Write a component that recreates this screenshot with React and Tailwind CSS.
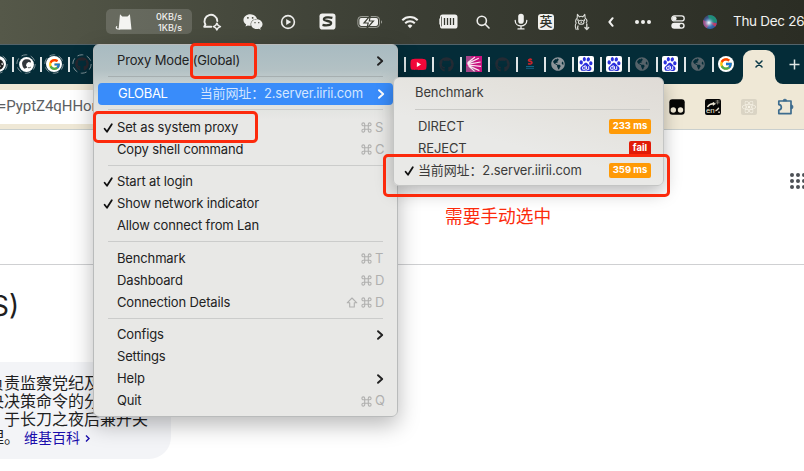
import React from 'react';
import { FaYoutube, FaGithub, FaWeixin, FaReact, FaGlobeAmericas } from 'react-icons/fa';
import { FcGoogle } from 'react-icons/fc';
import { SiBaidu } from 'react-icons/si';

/* ---------- shared glyphs ---------- */

const Check = () => (
  <svg width="11" height="12" viewBox="0 0 11 12" fill="none" stroke="currentColor" strokeWidth="1.8" strokeLinecap="round" strokeLinejoin="round">
    <path d="M1.6 6.8 4 9.8 8.8 2.2" />
  </svg>
);

const Chevron = () => (
  <svg width="8" height="12" viewBox="0 0 8 12" fill="none" stroke="currentColor" strokeWidth="1.9" strokeLinecap="round" strokeLinejoin="round">
    <path d="M2 2.200 6.200 6 2 9.800" />
  </svg>
);

const Command = () => (
  <svg width="11" height="11" viewBox="0 0 11 11" fill="none" stroke="currentColor" strokeWidth="1.1">
    <path d="M3.7 3.7h3.6v3.6H3.7zM3.7 3.7H2.3a1.4 1.4 0 1 1 1.4-1.4zM7.3 3.7V2.3a1.4 1.4 0 1 1 1.4 1.4zM7.3 7.3h1.4a1.4 1.4 0 1 1-1.4 1.4zM3.7 7.3v1.4a1.4 1.4 0 1 1-1.4-1.4z" />
  </svg>
);

const Shift = () => (
  <svg width="12" height="11" viewBox="0 0 12 11" fill="none" stroke="currentColor" strokeWidth="1.1" strokeLinejoin="round">
    <path d="M6 1 10.8 5.8H8.3V10H3.7V5.8H1.2z" />
  </svg>
);

/* ---------- system menu bar ---------- */

const CatIcon = () => (
  <svg width="18" height="18" viewBox="0 0 18 18" fill="#f4f4f2">
    <path d="M5 1.2 7.3 3.4h5.2L14.9 1.2l1.6 15.3H3.6z" />
    <path d="M4.6 16H3C1.4 16 .8 14.7 1.7 13.6" fill="none" stroke="#f4f4f2" strokeWidth="1.2" strokeLinecap="round" />
  </svg>
);

const ChatIcon = () => (
  <svg width="20" height="18" viewBox="0 0 20 18" fill="none" stroke="#eeeeec" strokeWidth="1.9" strokeLinecap="round" strokeLinejoin="round">
    <path d="M9.3 13.7H2.2l1.2-2.2A6.4 6.4 0 1 1 15.3 8" />
    <path d="M14.9 10.2 16.1 12.4 18.4 13.6 16.1 14.8 14.9 17 13.7 14.8 11.4 13.6 13.7 12.4z" strokeWidth="1.5" />
  </svg>
);

const PlayIcon = () => (
  <svg width="16" height="16" viewBox="0 0 16 16">
    <circle cx="8" cy="8" r="6.4" fill="none" stroke="#eeeeec" strokeWidth="1.6" />
    <path d="M6.2 4.9v6.2L11.2 8z" fill="#eeeeec" />
  </svg>
);

const SogouIcon = () => (
  <svg width="17" height="17" viewBox="0 0 17 17">
    <rect x=".5" y=".5" width="16" height="16" rx="2.8" fill="#f0f0ee" />
    <path d="M13.4 4.8C10.5 4 5 3.9 4.9 6.3c0 2.2 7.2 1.2 7.2 3.6 0 2.6-5.3 2.8-8.6 1.9" fill="none" stroke="#34372e" strokeWidth="2.3" />
  </svg>
);

const BatteryIcon = () => (
  <svg width="26" height="14" viewBox="0 0 26 14">
    <rect x=".9" y="1.6" width="21.6" height="10.8" rx="3.2" fill="none" stroke="#a3a49d" strokeWidth="1" />
    <rect x="2.4" y="3.1" width="18.6" height="7.8" rx="1.8" fill="#f0f0ee" />
    <path d="M24 5.2v3.6c1.3-.6 1.3-3 0-3.6z" fill="#a3a49d" />
    <path d="M13.4.4 7 8h4.2l-1.3 5.4L16.4 6h-4.1z" fill="#f4f4f2" stroke="#3c3f35" strokeWidth="1.2" />
  </svg>
);

const WifiIcon = () => (
  <svg width="18" height="14" viewBox="0 0 18 14" fill="none" stroke="#f0f0ee" strokeWidth="2">
    <path d="M1.3 5.2a10.9 10.9 0 0 1 15.4 0" />
    <path d="M4.2 8.2a6.8 6.8 0 0 1 9.6 0" />
    <path d="M9 13.2 6.6 10.7a3.4 3.4 0 0 1 4.8 0z" fill="#f0f0ee" stroke="none" />
  </svg>
);

const MemoryIcon = () => (
  <svg width="19" height="15" viewBox="0 0 19 15">
    <rect x="1" y=".5" width="17.5" height="14" rx="2.6" fill="#f0f0ee" />
    <path d="M.3 4.5h1.4v6H.3z" fill="#f0f0ee" />
    <path d="M5.5 4v7M8.500 4v7M11.500 4v7M14.500 4v7" stroke="#34372e" strokeWidth="1.3" />
    <path d="M2.500 2.6v9.8" stroke="#34372e" strokeWidth=".7" />
  </svg>
);

const SearchIcon = () => (
  <svg width="14" height="14" viewBox="0 0 14 14" fill="none" stroke="#eeeeec" strokeWidth="1.6" strokeLinecap="round">
    <circle cx="5.8" cy="5.8" r="4.6" />
    <path d="m9.3 9.3 3.7 3.7" />
  </svg>
);

const MicIcon = () => (
  <svg width="14" height="17" viewBox="0 0 14 17" fill="none" stroke="#f0f0ee" strokeWidth="1.3" strokeLinecap="round">
    <rect x="4.2" y=".8" width="5.6" height="9.9" rx="2.8" fill="#f0f0ee" stroke="none" />
    <path d="M1.2 7.4c0 7.4 11.6 7.4 11.6 0M7 13v2.8M4 15.9h6" />
  </svg>
);

const LlamaIcon = () => (
  <svg width="16" height="18" viewBox="0 0 16 18" fill="none" stroke="#d9dad5" strokeWidth="1.1" strokeLinecap="round" strokeLinejoin="round">
    <path d="M3.200 5.2 3.400 1.4 5.400 3.8M8.8 3.8l2-2.4.4 3.8M5.4 3.8c1-.7 2.4-.7 3.400 0M3.200 5.200C1.2 6.5 1.4 9 2.2 10c-1 1.6-1.2 4 0 6.4M11.200 5.2c2 1.3 1.8 3.5 1.100 4.6" />
    <ellipse cx="7.2" cy="9.3" rx="2.8" ry="2" />
    <path d="M4 6.800v.6M10.4 6.800v.6M7.2 9v.5M4 13c-.6 1-.6 2.200 0 3.400M12.8 11v5.4M10.9 14.6l1.9 2 1.9-2" strokeWidth="1.4" />
  </svg>
);

const ControlIcon = () => (
  <svg width="14" height="14" viewBox="0 0 14 14">
    <rect x=".8" y=".9" width="12.4" height="5" rx="2.5" fill="none" stroke="#f0f0ee" strokeWidth="1.3" />
    <circle cx="3.4" cy="3.4" r="2.2" fill="#f0f0ee" />
    <rect x=".3" y="7.8" width="13.4" height="6" rx="3" fill="#f0f0ee" />
    <circle cx="10.5" cy="10.8" r="1.8" fill="#34372e" />
  </svg>
);

const SiriIcon = () => (
  <svg width="14" height="14" viewBox="0 0 14 14">
    <defs>
      <radialGradient id="siriCore" cx=".42" cy=".55" r=".42">
        <stop offset="0" stopColor="#fff" />
        <stop offset=".3" stopColor="#b9dcee" stopOpacity=".8" />
        <stop offset="1" stopColor="#3566b0" stopOpacity="0" />
      </radialGradient>
      <linearGradient id="siriBase" x1="0" y1="0" x2="1" y2="1">
        <stop offset="0" stopColor="#3d3556" />
        <stop offset=".5" stopColor="#3c6ea8" />
        <stop offset="1" stopColor="#2a55a4" />
      </linearGradient>
    </defs>
    <circle cx="7" cy="7" r="7" fill="url(#siriBase)" />
    <path d="M5 .4C9-.6 13.6 2 14 7c-3 1-5 .6-7 0z" fill="#1f8f76" />
    <path d="M.4 5C2 6 4 6.6 7 7c-.6 3-2 5-3.4 6C.8 11.4-.3 8 .4 5z" fill="#b8437a" />
    <path d="M13.8 8.4C12 8 10 7.4 7 7c2 2 3 4 5.4 4.4z" fill="#c33a63" />
    <circle cx="7" cy="7" r="7" fill="url(#siriCore)" />
  </svg>
);

function MenuBar() {
  return (
    <header className="flex h-[45px] items-center border-b border-[#53636a] bg-gradient-to-r from-[#555849] via-[#3b3e34] to-[#2b2d24] pb-px text-[#f2f2f0] *:shrink-0">
      <div className="ml-[106px] flex h-[25px] w-[86px] items-center rounded-[5px] bg-white/15 pl-[9px] pr-[10px]">
        <CatIcon />
        <div className="ml-auto text-right text-[9px] font-medium leading-[11px]">
          <div>0KB/s</div>
          <div>1KB/s</div>
        </div>
      </div>
      <div className="flex w-[40px] justify-center"><ChatIcon /></div>
      <div className="flex w-[42px] justify-center"><FaWeixin size={20} color="#eeeeec" /></div>
      <div className="flex w-[28px] justify-center"><PlayIcon /></div>
      <div className="flex w-[50px] justify-center"><SogouIcon /></div>
      <div className="flex w-[36px] justify-center"><BatteryIcon /></div>
      <div className="flex w-[44px] justify-center"><WifiIcon /></div>
      <div className="flex w-[32px] justify-center"><MemoryIcon /></div>
      <div className="flex w-[38px] justify-center"><SearchIcon /></div>
      <div className="ml-[5px] flex w-[28px] justify-center"><MicIcon /></div>
      <div className="flex w-[22px] justify-center">
        <span className="flex size-4 items-center justify-center rounded-[3px] bg-[#f0f0ee] text-[13px] font-medium leading-none text-[#2e3128]">英</span>
      </div>
      <div className="flex w-[50px] justify-center"><LlamaIcon /></div>
      <div className="flex w-2 justify-center">
        <svg width="6" height="10" viewBox="0 0 6 10" fill="none" stroke="#f0f0ee" strokeWidth="2" strokeLinecap="round" strokeLinejoin="round"><path d="M4.6 1.2 1.4 5l3.2 3.8" /></svg>
      </div>
      <div className="ml-[13px] flex w-[30px] justify-center gap-[2px]">
        <i className="size-1 rounded-full bg-[#f0f0ee]" />
        <i className="size-1 rounded-full bg-[#f0f0ee]" />
        <i className="size-1 rounded-full bg-[#f0f0ee]" />
      </div>
      <div className="flex w-[40px] justify-center"><ControlIcon /></div>
      <div className="flex w-[24px] justify-center"><SiriIcon /></div>
      <span className="ml-[11px] whitespace-nowrap text-[13.5px] tracking-[-0.3px]">Thu Dec 26</span>
    </header>
  );
}

/* ---------- browser chrome ---------- */

function Ringed({ children }) {
  return (
    <span className="relative flex size-4 items-center justify-center">
      {children}
      <svg className="absolute -left-[2px] -top-[2px]" width="20" height="20" viewBox="0 0 20 20" fill="none">
        <circle cx="10" cy="10" r="9.2" stroke="#7d9096" strokeWidth="1" strokeDasharray="6 3.6" />
      </svg>
    </span>
  );
}

const White = ({ children }) => (
  <span className="flex size-4 items-center justify-center rounded-full bg-white">{children}</span>
);

const Penguin = () => (
  <svg width="15" height="15" viewBox="0 0 15 15">
    <circle cx="7.5" cy="7.5" r="7.4" fill="#fff" />
    <path d="M3.2 7.6C2.6 4 5 2 8.4 2.2c2.6.2 3.800 1.600 3.600 3.200L9.4 5 7.6 6.4 7 8.400l1.400 2.200-3 1.200C4 10.800 3.400 9 3.200 7.600z" fill="#33373c" />
    <path d="M9 10.6c1.2.4 2.4 0 3-.8" stroke="#555" strokeWidth="1" fill="none" />
  </svg>
);

const Baidu = () => (
  <span className="flex size-4 items-center justify-center rounded-[2px] bg-white">
    <SiBaidu size={14} color="#2a2fdc" />
  </span>
);

const Globe = ({ color }) => <FaGlobeAmericas size={14} color={color} />;

const Burst = () => (
  <svg width="16" height="16" viewBox="0 0 16 16">
    <rect width="16" height="16" fill="#c9127f" />
    <path d="M0 0h5l3 7-8 1zM0 10h7l4 6H0z" fill="#a8458a" />
    <path d="M1.5 8.4 14.6 6M1.8 9 15 10.4M2.4 9.6l11 5M1.4 7.6 12.8 2.2M3 10.4 8.6 15.4M1.6 6.8 9 1" stroke="#fbe6f2" strokeWidth="1.2" />
  </svg>
);

const SIcon = () => (
  <svg width="10" height="12" viewBox="0 0 10 12" fill="none">
    <path d="M6.800 1.8C5.6.8 3.4 1 3.500 2.400c.1 1.200 3.500.7 3.500 2.100C7 6.200 4.400 6.300 3.100 5.500" stroke="#c9242c" strokeWidth="1.600" />
    <path d="M1 8.500h8M1 10.300h8" stroke="#136586" strokeWidth="1" />
  </svg>
);

const Slot = ({ children }) => (
  <div className="relative flex h-full w-7 shrink-0 items-center justify-center">
    <i className="absolute left-0 h-[15px] w-[1.5px] bg-[#dfe5e6]" />
    {children}
  </div>
);

function TabStrip() {
  return (
    <div className="flex h-[39px] overflow-hidden bg-[#042c38]">
      <div className="-ml-4 flex h-[38px] shrink-0 items-center">
        <Slot><Ringed><White><FaGlobeAmericas size={11} color="#222" /></White></Ringed></Slot>
        <Slot><Ringed><Penguin /></Ringed></Slot>
        <Slot><Ringed><White><FcGoogle size={13} /></White></Ringed></Slot>
        <Slot><Ringed><FaGithub size={14} color="#29262d" /></Ringed></Slot>
        <div className="w-[308px]" />
        <Slot><FaYoutube size={17} color="#f5083a" className="rounded bg-[linear-gradient(#fff,#fff)] bg-[length:8px_6px] bg-center bg-no-repeat" /></Slot>
        <Slot><FaGithub size={15} color="#242b34" /></Slot>
        <Slot><Burst /></Slot>
        <Slot><FaGithub size={15} color="#242b34" /></Slot>
        <Slot><SIcon /></Slot>
        <Slot><Globe color="#8d959a" /></Slot>
        <Slot><Baidu /></Slot>
        <Slot><Baidu /></Slot>
        <Slot><Globe color="#56636a" /></Slot>
        <Slot><Baidu /></Slot>
        <Slot><Globe color="#56636a" /></Slot>
        <Slot><White><FcGoogle size={14} /></White></Slot>
      </div>
      <div className="-ml-[5px] mt-[5px] flex shrink-0 items-end">
        <svg width="8" height="8" viewBox="0 0 8 8"><path d="M8 0v8H0a8 8 0 0 0 8-8z" fill="#efe8d6" /></svg>
        <div className="flex h-[34px] w-8 items-center justify-center rounded-t-[9px] bg-[#efe8d6] pb-[6px]">
          <svg width="8" height="8" viewBox="0 0 8 8" stroke="#0b3a48" strokeWidth="1.5" strokeLinecap="round"><path d="m1 1 6 6M7 1 1 7" /></svg>
        </div>
        <svg width="8" height="8" viewBox="0 0 8 8"><path d="M0 0v8h8a8 8 0 0 1-8-8z" fill="#efe8d6" /></svg>
      </div>
      <div className="ml-[6px] flex h-[38px] shrink-0 items-center">
        <svg width="11" height="11" viewBox="0 0 11 11" stroke="#e0e6e4" strokeWidth="1.5"><path d="M5.5.5v10M.5 5.500h10" /></svg>
      </div>
    </div>
  );
}

const Tamper = () => (
  <svg width="16" height="16" viewBox="0 0 16 16">
    <rect x=".3" y=".3" width="15.400" height="15.400" rx="3" fill="#060606" />
    <circle cx="4.300" cy="11" r="2.700" fill="#efe8d6" />
    <circle cx="11.500" cy="11" r="2.700" fill="#efe8d6" />
  </svg>
);

function Translate() {
  return (
    <span className="relative block size-4 rounded-[2px] bg-[#060606]">
      <svg className="absolute inset-0" width="16" height="16" viewBox="0 0 16 16" fill="none" stroke="#efe8d6">
        <path d="M2.500 8C4 5.500 6 4.500 8.500 4.800M10.500 11.800c1.500-.3 2.600-1.400 3.200-3" strokeWidth="1.400" />
        <path d="M8 3.200 10.500 4.800 8 6.400z" fill="#efe8d6" strokeWidth=".6" />
        <path d="M10.600 2h4M10.600 3.800h4M12.600 1v4.500" stroke="#8d897e" strokeWidth=".8" />
        <path d="M13.300 13.300h1.500" strokeWidth="1.500" />
      </svg>
      <span className="absolute left-px top-[7px] font-['Roboto',sans-serif] text-[8px] leading-[9px] text-[#efe8d6]">en</span>
    </span>
  );
}

function Toolbar() {
  return (
    <div className="flex h-[46px] items-center border-b border-[#c9cfce] bg-[#efe8d6]">
      <div className="flex h-[34px] w-[600px] items-center rounded-r-full bg-white font-['Roboto',sans-serif] text-[15px] tracking-[-0.05px] text-[#5c6063]"><span className="-ml-[2px]">=PyptZ4qHHor</span></div>
      <div className="ml-[69px] flex items-center gap-5">
        <Tamper />
        <Translate />
        <span className="flex size-4 items-center justify-center rounded-[2px] bg-[#dad4c4]"><FaReact size={14} color="#f8f4e8" /></span>
        <svg width="18" height="18" viewBox="0 0 18 18" fill="none" stroke="#3d6c8e" strokeWidth="1.700" strokeLinejoin="round">
          <path d="M1.800 3h12.200v12.600H1.800v-3.600c3.400-.4 3.400-5 0-5.400z" />
          <path d="M14 6.800a2 2 0 0 1 0 4.200zM6 3a1.900 1.900 0 0 1 3.800 0z" fill="#3d6c8e" strokeWidth=".6" />
        </svg>
      </div>
    </div>
  );
}

/* ---------- web page ---------- */

function Page() {
  return (
    <main className="flex h-[341px] flex-col overflow-hidden bg-white text-[#1f1f1f]">
      <div className="flex h-[135px] shrink-0 justify-end border-b border-[#cfd0d2] pt-[43px]">
        <div className="-mr-[2px] grid h-4 grid-cols-3 gap-[2px]">
          {Array.from({ length: 9 }, (_, i) => <i key={i} className="size-1 rounded-full bg-[#4d5156]" />)}
        </div>
      </div>
      <h1 className="-ml-[9px] mt-[23px] h-9 shrink-0 text-[28px] leading-9">S)</h1>
      <section className="mt-[38px] h-[97px] w-[171px] shrink-0 overflow-hidden rounded-br-[22px] rounded-tr-[22px] bg-[#f3f4f7] pt-[12px]">
        <div className="-ml-3 whitespace-nowrap text-[16px] leading-[18.200px]">
          <p>负责监察党纪及</p>
          <p>央决策命令的分</p>
          <p className="pl-4">于长刀之夜后兼开关</p>
          <p className="-mt-px">理。<a className="ml-1 text-[14px] text-[#1a0dab]">维基百科</a>
            <svg className="ml-[5px] inline" width="5" height="9" viewBox="0 0 5 9" fill="none" stroke="#1a0dab" strokeWidth="1.400"><path d="m1 1.500 3 3-3 3" /></svg>
          </p>
        </div>
      </section>
    </main>
  );
}

/* ---------- menus ---------- */

function Item({ label, checked, keys, shift, sub }) {
  return (
    <div className="flex h-[22px] items-center pr-[13px]">
      <span className="flex w-[23px] justify-center pl-[6px] text-[#111]">{checked && <Check />}</span>
      <span>{label}</span>
      {keys && (
        <span className="ml-auto flex items-center gap-[3px] text-[#b0b0af]">
          {shift && <Shift />}
          <Command />
          <span className="w-[9px]">{keys}</span>
        </span>
      )}
      {sub && <span className="ml-auto"><Chevron /></span>}
    </div>
  );
}

const Rule = () => (
  <div className="flex h-[10.5px] items-start px-[14px] pt-1"><i className="h-px w-full bg-[#cbcccb]" /></div>
);

function MainMenu() {
  return (
    <nav className="absolute left-[93px] top-[44px] h-[373px] w-[305px] rounded-[6px] border border-[#b9bbbb] bg-[linear-gradient(180deg,#a8bbc1_0px,#b3c1c4_25px,#dcdfdc_52px,#e8e8e6_75px,#e8e8e6_100%)] pt-[4.5px] text-[13px] tracking-[-0.15px] text-[#222] shadow-[0_8px_22px_rgba(0,0,0,0.28)]">
      <Item label="Proxy Mode (Global)" sub />
      <div className="flex h-[11px] items-start px-[14px] pt-[4.5px]"><i className="h-px w-full bg-[#a6afb0]" /></div>
      <div className="mx-1 flex h-[22px] items-center rounded-[4px] bg-[#398cfa] pl-5 pr-[8px] text-white">
        <span className="tracking-[-0.3px]">GLOBAL</span>
        <span className="ml-auto text-[#d3e6ff]">当前网址：2.server.iirii.com</span>
        <span className="ml-[14px]"><Chevron /></span>
      </div>
      <div className="flex h-[12px] items-start px-[14px] pt-[4.5px]"><i className="h-px w-full bg-[#cbcccb]" /></div>
      <Item label="Set as system proxy" checked keys="S" />
      <Item label="Copy shell command" keys="C" />
      <Rule />
      <Item label="Start at login" checked />
      <Item label="Show network indicator" checked />
      <Item label="Allow connect from Lan" />
      <Rule />
      <Item label="Benchmark" keys="T" />
      <Item label="Dashboard" keys="D" />
      <Item label="Connection Details" keys="D" shift />
      <Rule />
      <Item label="Configs" sub />
      <Item label="Settings" />
      <Item label="Help" sub />
      <Item label="Quit" keys="Q" />
    </nav>
  );
}

function Server({ name, delay, fail, checked }) {
  return (
    <div className="flex h-[22px] items-center pr-[12px]">
      <span className="flex w-[24px] justify-end pr-[3px] text-[#111]">{checked && <Check />}</span>
      <span>{name}</span>
      <span className={fail
        ? 'mb-px ml-auto flex h-[15px] w-[22px] items-center justify-center rounded-[2px] bg-[#e11b07] text-[9.5px] font-bold tracking-normal text-white'
        : 'mb-px ml-auto flex h-[15px] w-[42px] items-center justify-center rounded-[2px] bg-[#ff9a06] text-[9.5px] font-bold tracking-normal text-white'}>{delay}</span>
    </div>
  );
}

function SubMenu() {
  return (
    <nav className="absolute left-[393px] top-[77px] h-[109px] w-[271px] rounded-[6px] border border-[#c4c5c4] bg-[linear-gradient(195deg,#dfdbd6_0%,#e4e2dd_30%,#e9e9e7_60%)] pt-[4px] text-[13px] tracking-[-0.13px] text-[#3b3b3a] shadow-[0_6px_18px_rgba(0,0,0,0.28)]">
      <div className="flex h-[22px] items-center pl-[21px]">Benchmark</div>
      <div className="flex h-[12px] items-start pl-[21px] pr-[13px] pt-[5px]"><i className="h-px w-full bg-[#cacac7]" /></div>
      <Server name="DIRECT" delay="233 ms" />
      <Server name="REJECT" delay="fail" fail />
      <Server name="当前网址：2.server.iirii.com" delay="359 ms" checked />
    </nav>
  );
}

export default function App() {
  return (
    <div className="relative h-[471px] w-[804px] overflow-hidden bg-white font-['Inter','Noto_Sans_CJK_SC',sans-serif]">
      <MenuBar />
      <TabStrip />
      <Toolbar />
      <Page />
      <MainMenu />
      <SubMenu />
      {/* red annotations */}
      <div className="absolute left-[190px] top-[43px] h-[36px] w-[67px] rounded-[5px] border-[3px] border-[#fc2a0c]" />
      <div className="absolute left-[93px] top-[111px] h-[32px] w-[165px] rounded-[5px] border-[3px] border-[#fc2a0c]" />
      <div className="absolute left-[383px] top-[154px] h-[43px] w-[287px] rounded-[5px] border-[3px] border-[#fc2a0c]" />
      <p className="absolute left-[445px] top-[204px] whitespace-nowrap text-[17.700px] leading-[26px] text-[#fc2a0c]">需要手动选中</p>
    </div>
  );
}
